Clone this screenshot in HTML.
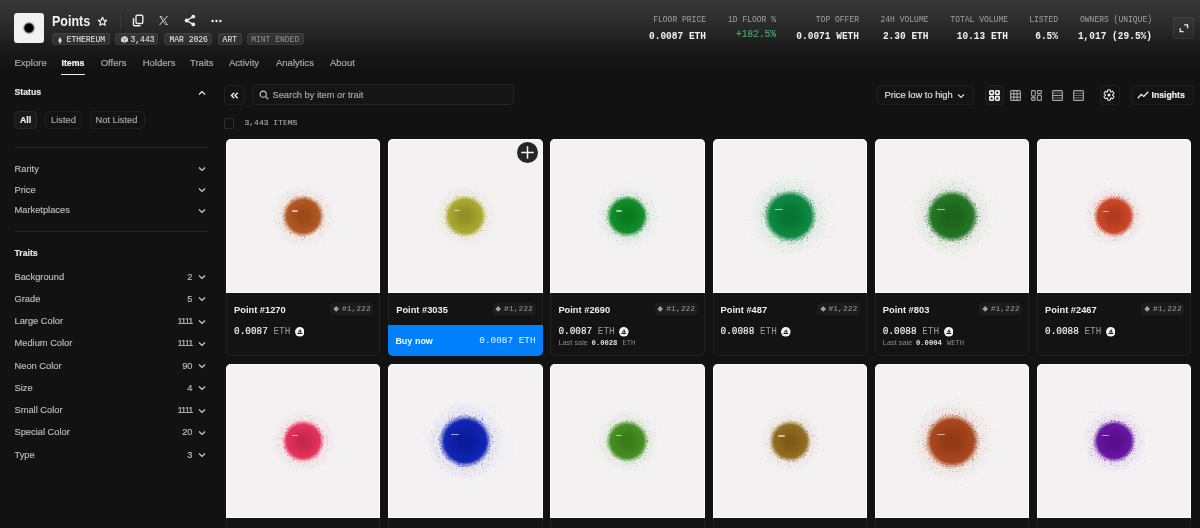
<!DOCTYPE html><html><head><meta charset="utf-8"><style>
*{margin:0;padding:0;box-sizing:border-box}
html,body{width:1200px;height:528px;overflow:hidden;background:#121212;font-family:"Liberation Sans",sans-serif;color:#e6e6e6}
.a{position:absolute}
.hdr{left:0;top:0;width:1200px;height:84px;background:linear-gradient(to bottom,#383838 0px,#303030 16px,#262626 32px,#1c1c1c 46px,#161616 57px,#121212 70px)}
.logo{left:14px;top:13px;width:30px;height:30px;border-radius:3px;background:#f1f1f1;overflow:hidden}
.logo i{position:absolute;left:8.2px;top:7.6px;width:14px;height:14px;border-radius:50%;background:radial-gradient(circle closest-side,#000 0,#000 52%,rgba(0,0,0,.85) 62%,rgba(0,0,0,.3) 75%,rgba(0,0,0,.07) 88%,rgba(0,0,0,0) 100%)}
.title{left:52px;top:13.6px;font-size:12.5px;font-weight:bold;color:#f2f2f2;line-height:16px;transform:scaleY(1.12);transform-origin:left center}
.badge{top:33px;height:12px;border-radius:3px;background:rgba(255,255,255,.08);border:0.5px solid rgba(255,255,255,.06);font-family:"Liberation Mono",monospace;font-size:8px;line-height:12px;color:#e0e0e0;white-space:nowrap}
.badge span{transform:scaleY(1.15);-webkit-text-stroke:0.08px currentColor}
.stat{text-align:right;font-family:"Liberation Mono",monospace;white-space:nowrap}
.stat .l{font-size:8px;color:#a0a0a0;line-height:10px;height:10px;transform:scaleY(1.12);transform-origin:right center}
.stat .v{font-size:9.5px;font-weight:bold;color:#f0f0f0;line-height:12px;margin-top:6.2px;transform:scaleY(1.1);transform-origin:right center}
.tab{top:57px;font-size:9.5px;color:#a8a8a8;line-height:12px;white-space:nowrap;-webkit-text-stroke:0.2px currentColor}
.side{font-size:9.3px;color:#bdbdbd;line-height:12px;white-space:nowrap;-webkit-text-stroke:0.15px currentColor}
.sb{font-weight:bold;color:#e8e8e8}
.btn{border:1px solid #202020;border-radius:4px;background:#131313}
.card{width:154.4px;height:217px;border:1px solid #222;border-radius:5px;background:#131313}
.img{position:absolute;left:-1px;top:-1px;width:154.4px;height:154.4px;background:#f3f1f2;border-radius:5px 5px 0 0;overflow:hidden;box-shadow:inset 0 0 0 1px rgba(255,255,255,.75)}
.dot{position:absolute;border-radius:50%}
.dash{position:absolute;height:1.1px;width:6px;background:rgba(255,255,255,.6);border-radius:1px}
.nm{left:7px;top:163.6px;font-size:9.3px;font-weight:bold;color:#f0f0f0;line-height:12px;white-space:nowrap}
.rk{top:163.4px;height:12px;border-radius:3px;background:#1c1c1c;font-family:"Liberation Mono",monospace;font-size:8px;line-height:12px;color:#9a9a9a;white-space:nowrap}
.rk b{position:absolute;left:3.6px;top:3.4px;width:4.4px;height:4.4px;background:#a0a0a0;transform:rotate(45deg)}
.pr{left:7px;top:186.2px;font-family:"Liberation Mono",monospace;font-size:9.4px;line-height:12px;color:#f2f2f2;white-space:nowrap;transform:scaleY(1.1);transform-origin:left center;-webkit-text-stroke:0.15px #f2f2f2}
.pr span{-webkit-text-stroke:0}
.pr span{color:#9a9a9a}
.os{position:absolute;width:9.5px;height:9.5px;border-radius:50%;background:#f2f2f2}
.ls{left:7px;top:198px;font-size:7.4px;color:#8a8a8a;line-height:10px;white-space:nowrap}
.ls b{font-family:"Liberation Mono",monospace;color:#e0e0e0;font-weight:bold;font-size:7.2px;margin-left:1.5px}
.ls span{font-family:"Liberation Mono",monospace;color:#8a8a8a;font-size:7.2px;margin-left:3px}
</style></head><body><div id="w" style="position:absolute;left:0;top:0;width:1200px;height:528px;will-change:transform">
<div class="a hdr"></div>
<div class="a logo"><i></i></div>
<div class="a title">Points</div>
<svg class="a" style="left:97px;top:16px" width="11" height="11" viewBox="0 0 24 24"><path d="M12 2.8l2.7 6 6.5.6-4.9 4.3 1.5 6.4L12 16.8l-5.8 3.3 1.5-6.4-4.9-4.3 6.5-.6z" fill="none" stroke="#f0f0f0" stroke-width="2.6" stroke-linejoin="round"/></svg>
<div class="a" style="left:120px;top:13px;width:1px;height:16px;background:#3a3a3a"></div>
<svg class="a" style="left:132px;top:14px" width="12" height="13" viewBox="0 0 12 13"><rect x="4" y="1.2" width="6.8" height="8.3" rx="1.2" fill="none" stroke="#e8e8e8" stroke-width="1.4"/><path d="M1.5 4v6.8a1 1 0 0 0 1 1h6" fill="none" stroke="#e8e8e8" stroke-width="1.4"/></svg>
<svg class="a" style="left:158px;top:15px" width="11" height="11" viewBox="0 0 24 24"><path d="M3 2h5.5l5 7 6-7h2.2l-7.1 8.3L22 22h-5.5l-5.4-7.6L4.6 22H2.4l7.6-8.9z M5.8 3.5l11.6 17h2.6L8.5 3.5z" fill="#e0e0e0" fill-rule="evenodd"/></svg>
<svg class="a" style="left:184px;top:14px" width="12" height="13" viewBox="0 0 12 13"><circle cx="9.3" cy="2.6" r="1.9" fill="#eee"/><circle cx="2.6" cy="6.5" r="1.9" fill="#eee"/><circle cx="9.3" cy="10.4" r="1.9" fill="#eee"/><path d="M9.3 2.6L2.6 6.5L9.3 10.4" fill="none" stroke="#eee" stroke-width="1.3"/></svg>
<svg class="a" style="left:211px;top:19px" width="11" height="4" viewBox="0 0 11 4"><circle cx="1.6" cy="2" r="1.2" fill="#eee"/><circle cx="5.5" cy="2" r="1.2" fill="#eee"/><circle cx="9.4" cy="2" r="1.2" fill="#eee"/></svg>
<div class="a badge" style="left:52px;width:58px"><svg class="a" style="left:4.6px;top:2.6px" width="4" height="7" viewBox="0 0 4 7"><path d="M2 0L3.8 3.5 2 7 0.2 3.5z" fill="#ddd"/></svg><span class="a" style="left:13.6px;top:0">ETHEREUM</span></div>
<div class="a badge" style="left:115px;width:43px"><svg class="a" style="left:4.8px;top:2.2px" width="7" height="7" viewBox="0 0 7 7"><path d="M3.5 0L7 1.7v3.6L3.5 7 0 5.3V1.7z" fill="#ddd"/><path d="M0 1.7L3.5 3.4L7 1.7M3.5 3.4V7" fill="none" stroke="#444" stroke-width="0.5"/></svg><span class="a" style="left:14.5px;top:0">3,443</span></div>
<div class="a badge" style="left:164px;width:48px"><span class="a" style="left:4.5px;top:0">MAR 2026</span></div>
<div class="a badge" style="left:218px;width:24px"><span class="a" style="left:3.6px;top:0">ART</span></div>
<div class="a badge" style="left:247px;width:57px"><span class="a" style="left:3.2px;top:0;color:#8e8e8e">MINT ENDED</span></div>
<div class="a stat" style="right:494px;top:14.5px"><div class="l">FLOOR PRICE</div><div class="v">0.0087 ETH</div></div>
<div class="a stat" style="right:424px;top:14.5px"><div class="l">1D FLOOR %</div><div class="v" style="color:#44a566;font-weight:normal;-webkit-text-stroke:0.2px #44a566;position:relative;top:-1.4px">+182.5%</div></div>
<div class="a stat" style="right:341px;top:14.5px"><div class="l">TOP OFFER</div><div class="v">0.0071 WETH</div></div>
<div class="a stat" style="right:271.5px;top:14.5px"><div class="l">24H VOLUME</div><div class="v">2.30 ETH</div></div>
<div class="a stat" style="right:192px;top:14.5px"><div class="l">TOTAL VOLUME</div><div class="v">10.13 ETH</div></div>
<div class="a stat" style="right:142px;top:14.5px"><div class="l">LISTED</div><div class="v">6.5%</div></div>
<div class="a stat" style="right:48px;top:14.5px"><div class="l">OWNERS (UNIQUE)</div><div class="v">1,017 (29.5%)</div></div>
<div class="a" style="left:1173px;top:17px;width:21px;height:22px;border-radius:4px;background:rgba(255,255,255,.03);border:1px solid rgba(255,255,255,.07)"></div>
<svg class="a" style="left:1173px;top:17px" width="22" height="22" viewBox="0 0 22 22"><path d="M11.2 7.9H14.6V11.3M10.6 14.6H7.2V11.2" fill="none" stroke="#f0f0f0" stroke-width="1.3"/></svg>
<div class="a tab" style="left:14.5px">Explore</div>
<div class="a tab" style="left:61.5px;color:#f4f4f4;font-weight:bold;font-size:8.75px">Items</div>
<div class="a tab" style="left:100.7px">Offers</div>
<div class="a tab" style="left:142.7px">Holders</div>
<div class="a tab" style="left:190px">Traits</div>
<div class="a tab" style="left:229px">Activity</div>
<div class="a tab" style="left:276px">Analytics</div>
<div class="a tab" style="left:330px">About</div>
<div class="a" style="left:61px;top:73.5px;width:24px;height:1.5px;background:#f0f0f0;border-radius:1px"></div>
<div class="a side sb" style="left:14.5px;top:86px;font-size:8.7px">Status</div>
<svg class="a" style="left:197.5px;top:89.5px" width="8" height="6" viewBox="0 0 8 6"><path d="M1 4.5L4 1.5L7 4.5" fill="none" stroke="#f0f0f0" stroke-width="1.15"/></svg>
<div class="a btn" style="left:14px;top:111px;width:23px;height:18px;background:#1a1a1a;border-color:#272727"></div>
<div class="a side sb" style="left:20px;top:114px;font-size:8.7px;color:#f4f4f4">All</div>
<div class="a btn" style="left:45px;top:111px;width:37px;height:18px"></div>
<div class="a side" style="left:51px;top:114px;color:#a8a8a8">Listed</div>
<div class="a btn" style="left:90px;top:111px;width:55px;height:18px"></div>
<div class="a side" style="left:95.5px;top:114px;color:#a8a8a8">Not Listed</div>
<div class="a" style="left:15px;top:147px;width:193px;height:1px;background:#242424"></div>
<div class="a side" style="left:14.5px;top:162.5px">Rarity</div>
<svg class="a" style="left:197.5px;top:166.1px" width="8" height="6" viewBox="0 0 8 6"><path d="M1 1.5L4 4.5L7 1.5" fill="none" stroke="#d0d0d0" stroke-width="1.15"/></svg>
<div class="a side" style="left:14.5px;top:183.5px">Price</div>
<svg class="a" style="left:197.5px;top:187.1px" width="8" height="6" viewBox="0 0 8 6"><path d="M1 1.5L4 4.5L7 1.5" fill="none" stroke="#d0d0d0" stroke-width="1.15"/></svg>
<div class="a side" style="left:14.5px;top:204.2px">Marketplaces</div>
<svg class="a" style="left:197.5px;top:207.79999999999998px" width="8" height="6" viewBox="0 0 8 6"><path d="M1 1.5L4 4.5L7 1.5" fill="none" stroke="#d0d0d0" stroke-width="1.15"/></svg>
<div class="a" style="left:15px;top:231px;width:193px;height:1px;background:#242424"></div>
<div class="a side sb" style="left:14.5px;top:247px;font-size:8.7px">Traits</div>
<div class="a side" style="left:14.5px;top:270.5px">Background</div>
<div class="a side" style="right:1007.5px;top:270.5px;">2</div>
<svg class="a" style="left:197.5px;top:274.1px" width="8" height="6" viewBox="0 0 8 6"><path d="M1 1.5L4 4.5L7 1.5" fill="none" stroke="#d0d0d0" stroke-width="1.15"/></svg>
<div class="a side" style="left:14.5px;top:292.75px">Grade</div>
<div class="a side" style="right:1007.5px;top:292.75px;">5</div>
<svg class="a" style="left:197.5px;top:296.35px" width="8" height="6" viewBox="0 0 8 6"><path d="M1 1.5L4 4.5L7 1.5" fill="none" stroke="#d0d0d0" stroke-width="1.15"/></svg>
<div class="a side" style="left:14.5px;top:315.0px">Large Color</div>
<div class="a side" style="right:1007.5px;top:315.0px;letter-spacing:-0.9px;">1111</div>
<svg class="a" style="left:197.5px;top:318.6px" width="8" height="6" viewBox="0 0 8 6"><path d="M1 1.5L4 4.5L7 1.5" fill="none" stroke="#d0d0d0" stroke-width="1.15"/></svg>
<div class="a side" style="left:14.5px;top:337.25px">Medium Color</div>
<div class="a side" style="right:1007.5px;top:337.25px;letter-spacing:-0.9px;">1111</div>
<svg class="a" style="left:197.5px;top:340.85px" width="8" height="6" viewBox="0 0 8 6"><path d="M1 1.5L4 4.5L7 1.5" fill="none" stroke="#d0d0d0" stroke-width="1.15"/></svg>
<div class="a side" style="left:14.5px;top:359.5px">Neon Color</div>
<div class="a side" style="right:1007.5px;top:359.5px;">90</div>
<svg class="a" style="left:197.5px;top:363.1px" width="8" height="6" viewBox="0 0 8 6"><path d="M1 1.5L4 4.5L7 1.5" fill="none" stroke="#d0d0d0" stroke-width="1.15"/></svg>
<div class="a side" style="left:14.5px;top:381.75px">Size</div>
<div class="a side" style="right:1007.5px;top:381.75px;">4</div>
<svg class="a" style="left:197.5px;top:385.35px" width="8" height="6" viewBox="0 0 8 6"><path d="M1 1.5L4 4.5L7 1.5" fill="none" stroke="#d0d0d0" stroke-width="1.15"/></svg>
<div class="a side" style="left:14.5px;top:404.0px">Small Color</div>
<div class="a side" style="right:1007.5px;top:404.0px;letter-spacing:-0.9px;">1111</div>
<svg class="a" style="left:197.5px;top:407.6px" width="8" height="6" viewBox="0 0 8 6"><path d="M1 1.5L4 4.5L7 1.5" fill="none" stroke="#d0d0d0" stroke-width="1.15"/></svg>
<div class="a side" style="left:14.5px;top:426.25px">Special Color</div>
<div class="a side" style="right:1007.5px;top:426.25px;">20</div>
<svg class="a" style="left:197.5px;top:429.85px" width="8" height="6" viewBox="0 0 8 6"><path d="M1 1.5L4 4.5L7 1.5" fill="none" stroke="#d0d0d0" stroke-width="1.15"/></svg>
<div class="a side" style="left:14.5px;top:448.5px">Type</div>
<div class="a side" style="right:1007.5px;top:448.5px;">3</div>
<svg class="a" style="left:197.5px;top:452.1px" width="8" height="6" viewBox="0 0 8 6"><path d="M1 1.5L4 4.5L7 1.5" fill="none" stroke="#d0d0d0" stroke-width="1.15"/></svg>
<div class="a btn" style="left:223.5px;top:84.5px;width:21px;height:20.5px"></div>
<svg class="a" style="left:229.5px;top:91.5px" width="9" height="7" viewBox="0 0 9 7"><path d="M4.2 0.8L1.5 3.5L4.2 6.2M7.7 0.8L5 3.5L7.7 6.2" fill="none" stroke="#f0f0f0" stroke-width="1.4"/></svg>
<div class="a btn" style="left:252px;top:84px;width:262px;height:21px;background:#151515;border-color:#242424"></div>
<svg class="a" style="left:259px;top:90px" width="10" height="10" viewBox="0 0 10 10"><circle cx="4.2" cy="4.2" r="3.1" fill="none" stroke="#cfcfcf" stroke-width="1.1"/><path d="M6.4 6.4L9.2 9.2" stroke="#cfcfcf" stroke-width="1.2"/></svg>
<div class="a side" style="left:272.5px;top:88.5px;color:#a8a8a8">Search by item or trait</div>
<div class="a" style="left:223.5px;top:118px;width:10.5px;height:10.5px;border:1px solid #2e2e2e;border-radius:2px"></div>
<div class="a" style="left:244.5px;top:117.5px;font-family:'Liberation Mono',monospace;font-size:8px;line-height:10px;color:#ababab;-webkit-text-stroke:0.1px #ababab">3,443 ITEMS</div>
<div class="a btn" style="left:876.5px;top:84.5px;width:97px;height:20px"></div>
<div class="a side" style="left:884.5px;top:88.5px;color:#e0e0e0">Price low to high</div>
<svg class="a" style="left:957px;top:92.5px" width="8" height="6" viewBox="0 0 8 6"><path d="M1 1.5L4 4.5L7 1.5" fill="none" stroke="#e0e0e0" stroke-width="1.15"/></svg>
<div class="a btn" style="left:984.5px;top:84.5px;width:19px;height:20px;background:#161616"></div>
<svg class="a" style="left:988.8px;top:89.7px" width="11" height="11" viewBox="0 0 11 11" fill="none" stroke="#f0f0f0" stroke-width="1.6"><rect x="0.8" y="0.8" width="3.6" height="3.6" rx="0.6"/><rect x="6.6" y="0.8" width="3.6" height="3.6" rx="0.6"/><rect x="0.8" y="6.6" width="3.6" height="3.6" rx="0.6"/><rect x="6.6" y="6.6" width="3.6" height="3.6" rx="0.6"/></svg>
<svg class="a" style="left:1009.5px;top:89.5px" width="11" height="11" viewBox="0 0 11 11" fill="none" stroke="#a8a8a8" stroke-width="1.1"><rect x="0.6" y="0.6" width="9.8" height="9.8" rx="1"/><path d="M3.9 0.6v9.8M7.1 0.6v9.8M0.6 3.9h9.8M0.6 7.1h9.8"/></svg>
<svg class="a" style="left:1030.5px;top:89.5px" width="11" height="11" viewBox="0 0 11 11" fill="none" stroke="#a8a8a8" stroke-width="1.1"><rect x="0.6" y="0.6" width="3.6" height="5.5" rx="0.8"/><rect x="6.4" y="0.6" width="4" height="3" rx="0.8"/><rect x="0.6" y="7.6" width="3.6" height="2.8" rx="0.8"/><rect x="6.4" y="5.2" width="4" height="5.2" rx="0.8"/></svg>
<svg class="a" style="left:1051.5px;top:89.5px" width="11" height="11" viewBox="0 0 11 11" fill="none" stroke="#a8a8a8" stroke-width="1.1"><rect x="0.6" y="0.6" width="9.8" height="9.8" rx="1"/><path d="M0.6 5.5h9.8"/><path d="M0.6 3.1h9.8M0.6 7.9h9.8" stroke-width="0.6"/></svg>
<svg class="a" style="left:1072.5px;top:89.5px" width="11" height="11" viewBox="0 0 11 11" fill="none" stroke="#a8a8a8" stroke-width="1.1"><rect x="0.6" y="0.6" width="9.8" height="9.8" rx="1"/><path d="M0.6 3.2h9.8M0.6 5.5h9.8M0.6 7.8h9.8" stroke-width="0.6"/></svg>
<div class="a btn" style="left:1099.5px;top:85px;width:20px;height:19.5px"></div>
<svg class="a" style="left:1103.3px;top:88.8px" width="12" height="12" viewBox="0 0 24 24"><path d="M9.06 5.43 L9.33 1.95 A10.40 10.40 0 0 1 14.67 1.95 L14.94 5.43 A7.20 7.20 0 0 1 16.23 6.17 L19.37 4.66 A10.40 10.40 0 0 1 22.04 9.29 L19.16 11.26 A7.20 7.20 0 0 1 19.16 12.74 L22.04 14.71 A10.40 10.40 0 0 1 19.37 19.34 L16.23 17.83 A7.20 7.20 0 0 1 14.94 18.57 L14.67 22.05 A10.40 10.40 0 0 1 9.33 22.05 L9.06 18.57 A7.20 7.20 0 0 1 7.77 17.83 L4.63 19.34 A10.40 10.40 0 0 1 1.96 14.71 L4.84 12.74 A7.20 7.20 0 0 1 4.84 11.26 L1.96 9.29 A10.40 10.40 0 0 1 4.63 4.66 L7.77 6.17 A7.20 7.20 0 0 1 9.06 5.43 z" fill="none" stroke="#f0f0f0" stroke-width="2.1" stroke-linejoin="round"/><circle cx="12" cy="12" r="3" fill="#f0f0f0"/></svg>
<div class="a btn" style="left:1130.5px;top:85px;width:63px;height:19.5px"></div>
<svg class="a" style="left:1136.5px;top:91px" width="12" height="8" viewBox="0 0 12 8"><path d="M0.8 7.2L4.2 3.4L6.8 5.4L11.2 0.8" fill="none" stroke="#f0f0f0" stroke-width="1.3"/></svg>
<div class="a side sb" style="left:1151.5px;top:88.5px;font-size:8.7px;color:#f0f0f0">Insights</div>
<div class="a card" style="left:226.0px;top:139px"><div class="img"><svg width="155" height="155" style="position:absolute;left:0;top:0"><defs><radialGradient id="g0" cx="77.2" cy="77.2" r="43.85" gradientUnits="userSpaceOnUse"><stop offset="0" stop-color="#000"/><stop offset="0.417" stop-color="#000" stop-opacity="0.5"/><stop offset="0.542" stop-color="#000" stop-opacity="0.16"/><stop offset="0.708" stop-color="#000" stop-opacity="0.05"/><stop offset="1" stop-color="#000" stop-opacity="0"/></radialGradient><radialGradient id="h0" cx="77.2" cy="77.2" r="31.06" gradientUnits="userSpaceOnUse"><stop offset="0" stop-color="#9c4a1a"/><stop offset="0.159" stop-color="#9c4a1a"/><stop offset="0.529" stop-color="#b3551e" stop-opacity="0.97"/><stop offset="0.603" stop-color="#b3551e" stop-opacity="0.45"/><stop offset="0.676" stop-color="#b3551e" stop-opacity="0.06"/><stop offset="1" stop-color="#b3551e" stop-opacity="0"/></radialGradient><filter id="f0" x="0" y="0" width="155" height="155" filterUnits="userSpaceOnUse" color-interpolation-filters="sRGB"><feTurbulence type="fractalNoise" baseFrequency="2.3" numOctaves="1" seed="3" result="n"/><feColorMatrix in="n" type="matrix" values="0 0 0 0 0  0 0 0 0 0  0 0 0 0 0  2.5 0 0 0 -0.75" result="na"/><feComposite in="SourceGraphic" in2="na" operator="arithmetic" k1="0" k2="2.6" k3="-2.6" k4="0" result="m"/><feGaussianBlur in="m" stdDeviation="0.6" result="mb"/><feFlood flood-color="#b3551e" flood-opacity="0.55" result="c"/><feComposite in="c" in2="mb" operator="in"/></filter></defs><rect x="0" y="0" width="155" height="155" fill="url(#g0)" filter="url(#f0)"/><circle cx="77.2" cy="77.2" r="31.06" fill="url(#h0)"/></svg><div class="dash" style="left:65.71600000000001px;top:71.458px;width:6.263999999999999px"></div></div><div class="a nm">Point #1270</div><div class="a rk" style="right:6px;width:43px"><b></b><span class="a" style="left:11.5px;top:0">#1,222</span></div><div class="a pr">0.0087 <span>ETH</span></div><svg class="a" style="left:67.8px;top:187px" width="9.6" height="9.6" viewBox="0 0 20 20"><circle cx="10" cy="10" r="10" fill="#f2f2f2"/><path d="M9.6 4.2L6.4 11.4H9.6z" fill="#141414"/><path d="M10.6 3.6V11.4H14z" fill="#141414"/><path d="M4.6 12.4H15.6L14.4 14.8H5.6z" fill="#141414"/></svg></div>
<div class="a card" style="left:388.2px;top:139px"><div class="img"><svg width="155" height="155" style="position:absolute;left:0;top:0"><defs><radialGradient id="g1" cx="77.2" cy="77.2" r="44.35" gradientUnits="userSpaceOnUse"><stop offset="0" stop-color="#000"/><stop offset="0.417" stop-color="#000" stop-opacity="0.5"/><stop offset="0.542" stop-color="#000" stop-opacity="0.16"/><stop offset="0.708" stop-color="#000" stop-opacity="0.05"/><stop offset="1" stop-color="#000" stop-opacity="0"/></radialGradient><radialGradient id="h1" cx="77.2" cy="77.2" r="31.42" gradientUnits="userSpaceOnUse"><stop offset="0" stop-color="#939128"/><stop offset="0.159" stop-color="#939128"/><stop offset="0.529" stop-color="#a9a72e" stop-opacity="0.97"/><stop offset="0.603" stop-color="#a9a72e" stop-opacity="0.45"/><stop offset="0.676" stop-color="#a9a72e" stop-opacity="0.06"/><stop offset="1" stop-color="#a9a72e" stop-opacity="0"/></radialGradient><filter id="f1" x="0" y="0" width="155" height="155" filterUnits="userSpaceOnUse" color-interpolation-filters="sRGB"><feTurbulence type="fractalNoise" baseFrequency="2.3" numOctaves="1" seed="11" result="n"/><feColorMatrix in="n" type="matrix" values="0 0 0 0 0  0 0 0 0 0  0 0 0 0 0  2.5 0 0 0 -0.75" result="na"/><feComposite in="SourceGraphic" in2="na" operator="arithmetic" k1="0" k2="2.6" k3="-2.6" k4="0" result="m"/><feGaussianBlur in="m" stdDeviation="0.6" result="mb"/><feFlood flood-color="#a9a72e" flood-opacity="0.55" result="c"/><feComposite in="c" in2="mb" operator="in"/></filter></defs><rect x="0" y="0" width="155" height="155" fill="url(#g1)" filter="url(#f1)"/><circle cx="77.2" cy="77.2" r="31.42" fill="url(#h1)"/></svg><div class="dash" style="left:65.584px;top:71.392px;width:6.336px"></div></div><div class="a nm">Point #3035</div><div class="a rk" style="right:6px;width:43px"><b></b><span class="a" style="left:11.5px;top:0">#1,222</span></div><div class="a" style="left:-1px;top:185px;width:154.4px;height:31px;background:#0180fe;border-radius:0 0 5px 5px"></div><div class="a" style="left:6.2px;top:194.5px;font-size:9px;font-weight:bold;color:#f4f8ff;line-height:12px">Buy now</div><div class="a" style="right:6px;top:195px;font-family:'Liberation Mono',monospace;font-size:9.4px;color:#e8f2ff;line-height:12px">0.0087 ETH</div></div>
<div class="a card" style="left:550.4px;top:139px"><div class="img"><svg width="155" height="155" style="position:absolute;left:0;top:0"><defs><radialGradient id="g2" cx="77.2" cy="77.2" r="43.85" gradientUnits="userSpaceOnUse"><stop offset="0" stop-color="#000"/><stop offset="0.417" stop-color="#000" stop-opacity="0.5"/><stop offset="0.542" stop-color="#000" stop-opacity="0.16"/><stop offset="0.708" stop-color="#000" stop-opacity="0.05"/><stop offset="1" stop-color="#000" stop-opacity="0"/></radialGradient><radialGradient id="h2" cx="77.2" cy="77.2" r="31.06" gradientUnits="userSpaceOnUse"><stop offset="0" stop-color="#0a7a20"/><stop offset="0.159" stop-color="#0a7a20"/><stop offset="0.529" stop-color="#0c8c25" stop-opacity="0.97"/><stop offset="0.603" stop-color="#0c8c25" stop-opacity="0.45"/><stop offset="0.676" stop-color="#0c8c25" stop-opacity="0.06"/><stop offset="1" stop-color="#0c8c25" stop-opacity="0"/></radialGradient><filter id="f2" x="0" y="0" width="155" height="155" filterUnits="userSpaceOnUse" color-interpolation-filters="sRGB"><feTurbulence type="fractalNoise" baseFrequency="2.3" numOctaves="1" seed="5" result="n"/><feColorMatrix in="n" type="matrix" values="0 0 0 0 0  0 0 0 0 0  0 0 0 0 0  2.5 0 0 0 -0.75" result="na"/><feComposite in="SourceGraphic" in2="na" operator="arithmetic" k1="0" k2="2.6" k3="-2.6" k4="0" result="m"/><feGaussianBlur in="m" stdDeviation="0.6" result="mb"/><feFlood flood-color="#0c8c25" flood-opacity="0.55" result="c"/><feComposite in="c" in2="mb" operator="in"/></filter></defs><rect x="0" y="0" width="155" height="155" fill="url(#g2)" filter="url(#f2)"/><circle cx="77.2" cy="77.2" r="31.06" fill="url(#h2)"/></svg><div class="dash" style="left:65.71600000000001px;top:71.458px;width:6.263999999999999px"></div></div><div class="a nm">Point #2690</div><div class="a rk" style="right:6px;width:43px"><b></b><span class="a" style="left:11.5px;top:0">#1,222</span></div><div class="a pr">0.0087 <span>ETH</span></div><svg class="a" style="left:67.8px;top:187px" width="9.6" height="9.6" viewBox="0 0 20 20"><circle cx="10" cy="10" r="10" fill="#f2f2f2"/><path d="M9.6 4.2L6.4 11.4H9.6z" fill="#141414"/><path d="M10.6 3.6V11.4H14z" fill="#141414"/><path d="M4.6 12.4H15.6L14.4 14.8H5.6z" fill="#141414"/></svg><div class="a ls">Last sale <b>0.0028</b> <span>ETH</span></div></div>
<div class="a card" style="left:712.5999999999999px;top:139px"><div class="img"><svg width="155" height="155" style="position:absolute;left:0;top:0"><defs><radialGradient id="g3" cx="77.2" cy="77.2" r="55.44" gradientUnits="userSpaceOnUse"><stop offset="0" stop-color="#000"/><stop offset="0.417" stop-color="#000" stop-opacity="0.5"/><stop offset="0.542" stop-color="#000" stop-opacity="0.16"/><stop offset="0.708" stop-color="#000" stop-opacity="0.05"/><stop offset="1" stop-color="#000" stop-opacity="0"/></radialGradient><radialGradient id="h3" cx="77.2" cy="77.2" r="39.27" gradientUnits="userSpaceOnUse"><stop offset="0" stop-color="#077535"/><stop offset="0.159" stop-color="#077535"/><stop offset="0.529" stop-color="#08873d" stop-opacity="0.97"/><stop offset="0.603" stop-color="#08873d" stop-opacity="0.45"/><stop offset="0.676" stop-color="#08873d" stop-opacity="0.06"/><stop offset="1" stop-color="#08873d" stop-opacity="0"/></radialGradient><filter id="f3" x="0" y="0" width="155" height="155" filterUnits="userSpaceOnUse" color-interpolation-filters="sRGB"><feTurbulence type="fractalNoise" baseFrequency="2.3" numOctaves="1" seed="17" result="n"/><feColorMatrix in="n" type="matrix" values="0 0 0 0 0  0 0 0 0 0  0 0 0 0 0  2.5 0 0 0 -0.75" result="na"/><feComposite in="SourceGraphic" in2="na" operator="arithmetic" k1="0" k2="2.6" k3="-2.6" k4="0" result="m"/><feGaussianBlur in="m" stdDeviation="0.6" result="mb"/><feFlood flood-color="#08873d" flood-opacity="0.55" result="c"/><feComposite in="c" in2="mb" operator="in"/></filter></defs><rect x="0" y="0" width="155" height="155" fill="url(#g3)" filter="url(#f3)"/><circle cx="77.2" cy="77.2" r="39.27" fill="url(#h3)"/></svg><div class="dash" style="left:62.68px;top:69.94px;width:7.92px"></div></div><div class="a nm">Point #487</div><div class="a rk" style="right:6px;width:43px"><b></b><span class="a" style="left:11.5px;top:0">#1,222</span></div><div class="a pr">0.0088 <span>ETH</span></div><svg class="a" style="left:67.8px;top:187px" width="9.6" height="9.6" viewBox="0 0 20 20"><circle cx="10" cy="10" r="10" fill="#f2f2f2"/><path d="M9.6 4.2L6.4 11.4H9.6z" fill="#141414"/><path d="M10.6 3.6V11.4H14z" fill="#141414"/><path d="M4.6 12.4H15.6L14.4 14.8H5.6z" fill="#141414"/></svg></div>
<div class="a card" style="left:874.8px;top:139px"><div class="img"><svg width="155" height="155" style="position:absolute;left:0;top:0"><defs><radialGradient id="g4" cx="77.2" cy="77.2" r="55.44" gradientUnits="userSpaceOnUse"><stop offset="0" stop-color="#000"/><stop offset="0.417" stop-color="#000" stop-opacity="0.5"/><stop offset="0.542" stop-color="#000" stop-opacity="0.16"/><stop offset="0.708" stop-color="#000" stop-opacity="0.05"/><stop offset="1" stop-color="#000" stop-opacity="0"/></radialGradient><radialGradient id="h4" cx="77.2" cy="77.2" r="39.27" gradientUnits="userSpaceOnUse"><stop offset="0" stop-color="#1c641c"/><stop offset="0.159" stop-color="#1c641c"/><stop offset="0.529" stop-color="#207320" stop-opacity="0.97"/><stop offset="0.603" stop-color="#207320" stop-opacity="0.45"/><stop offset="0.676" stop-color="#207320" stop-opacity="0.06"/><stop offset="1" stop-color="#207320" stop-opacity="0"/></radialGradient><filter id="f4" x="0" y="0" width="155" height="155" filterUnits="userSpaceOnUse" color-interpolation-filters="sRGB"><feTurbulence type="fractalNoise" baseFrequency="2.3" numOctaves="1" seed="23" result="n"/><feColorMatrix in="n" type="matrix" values="0 0 0 0 0  0 0 0 0 0  0 0 0 0 0  2.5 0 0 0 -0.75" result="na"/><feComposite in="SourceGraphic" in2="na" operator="arithmetic" k1="0" k2="2.6" k3="-2.6" k4="0" result="m"/><feGaussianBlur in="m" stdDeviation="0.6" result="mb"/><feFlood flood-color="#207320" flood-opacity="0.55" result="c"/><feComposite in="c" in2="mb" operator="in"/></filter></defs><rect x="0" y="0" width="155" height="155" fill="url(#g4)" filter="url(#f4)"/><circle cx="77.2" cy="77.2" r="39.27" fill="url(#h4)"/></svg><div class="dash" style="left:62.68px;top:69.94px;width:7.92px"></div></div><div class="a nm">Point #803</div><div class="a rk" style="right:6px;width:43px"><b></b><span class="a" style="left:11.5px;top:0">#1,222</span></div><div class="a pr">0.0088 <span>ETH</span></div><svg class="a" style="left:67.8px;top:187px" width="9.6" height="9.6" viewBox="0 0 20 20"><circle cx="10" cy="10" r="10" fill="#f2f2f2"/><path d="M9.6 4.2L6.4 11.4H9.6z" fill="#141414"/><path d="M10.6 3.6V11.4H14z" fill="#141414"/><path d="M4.6 12.4H15.6L14.4 14.8H5.6z" fill="#141414"/></svg><div class="a ls">Last sale <b>0.0004</b> <span>WETH</span></div></div>
<div class="a card" style="left:1037.0px;top:139px"><div class="img"><svg width="155" height="155" style="position:absolute;left:0;top:0"><defs><radialGradient id="g5" cx="77.2" cy="77.2" r="43.34" gradientUnits="userSpaceOnUse"><stop offset="0" stop-color="#000"/><stop offset="0.417" stop-color="#000" stop-opacity="0.5"/><stop offset="0.542" stop-color="#000" stop-opacity="0.16"/><stop offset="0.708" stop-color="#000" stop-opacity="0.05"/><stop offset="1" stop-color="#000" stop-opacity="0"/></radialGradient><radialGradient id="h5" cx="77.2" cy="77.2" r="30.70" gradientUnits="userSpaceOnUse"><stop offset="0" stop-color="#b03b1f"/><stop offset="0.159" stop-color="#b03b1f"/><stop offset="0.529" stop-color="#ca4424" stop-opacity="0.97"/><stop offset="0.603" stop-color="#ca4424" stop-opacity="0.45"/><stop offset="0.676" stop-color="#ca4424" stop-opacity="0.06"/><stop offset="1" stop-color="#ca4424" stop-opacity="0"/></radialGradient><filter id="f5" x="0" y="0" width="155" height="155" filterUnits="userSpaceOnUse" color-interpolation-filters="sRGB"><feTurbulence type="fractalNoise" baseFrequency="2.3" numOctaves="1" seed="7" result="n"/><feColorMatrix in="n" type="matrix" values="0 0 0 0 0  0 0 0 0 0  0 0 0 0 0  2.5 0 0 0 -0.75" result="na"/><feComposite in="SourceGraphic" in2="na" operator="arithmetic" k1="0" k2="2.6" k3="-2.6" k4="0" result="m"/><feGaussianBlur in="m" stdDeviation="0.6" result="mb"/><feFlood flood-color="#ca4424" flood-opacity="0.55" result="c"/><feComposite in="c" in2="mb" operator="in"/></filter></defs><rect x="0" y="0" width="155" height="155" fill="url(#g5)" filter="url(#f5)"/><circle cx="77.2" cy="77.2" r="30.70" fill="url(#h5)"/></svg><div class="dash" style="left:65.848px;top:71.524px;width:6.191999999999999px"></div></div><div class="a nm">Point #2467</div><div class="a rk" style="right:6px;width:43px"><b></b><span class="a" style="left:11.5px;top:0">#1,222</span></div><div class="a pr">0.0088 <span>ETH</span></div><svg class="a" style="left:67.8px;top:187px" width="9.6" height="9.6" viewBox="0 0 20 20"><circle cx="10" cy="10" r="10" fill="#f2f2f2"/><path d="M9.6 4.2L6.4 11.4H9.6z" fill="#141414"/><path d="M10.6 3.6V11.4H14z" fill="#141414"/><path d="M4.6 12.4H15.6L14.4 14.8H5.6z" fill="#141414"/></svg></div>
<div class="a card" style="left:226.0px;top:364px"><div class="img"><svg width="155" height="155" style="position:absolute;left:0;top:0"><defs><radialGradient id="g6" cx="77.2" cy="77.2" r="44.35" gradientUnits="userSpaceOnUse"><stop offset="0" stop-color="#000"/><stop offset="0.417" stop-color="#000" stop-opacity="0.5"/><stop offset="0.542" stop-color="#000" stop-opacity="0.16"/><stop offset="0.708" stop-color="#000" stop-opacity="0.05"/><stop offset="1" stop-color="#000" stop-opacity="0"/></radialGradient><radialGradient id="h6" cx="77.2" cy="77.2" r="31.42" gradientUnits="userSpaceOnUse"><stop offset="0" stop-color="#c8284e"/><stop offset="0.159" stop-color="#c8284e"/><stop offset="0.529" stop-color="#e62e5a" stop-opacity="0.97"/><stop offset="0.603" stop-color="#e62e5a" stop-opacity="0.45"/><stop offset="0.676" stop-color="#e62e5a" stop-opacity="0.06"/><stop offset="1" stop-color="#e62e5a" stop-opacity="0"/></radialGradient><filter id="f6" x="0" y="0" width="155" height="155" filterUnits="userSpaceOnUse" color-interpolation-filters="sRGB"><feTurbulence type="fractalNoise" baseFrequency="2.3" numOctaves="1" seed="13" result="n"/><feColorMatrix in="n" type="matrix" values="0 0 0 0 0  0 0 0 0 0  0 0 0 0 0  2.5 0 0 0 -0.75" result="na"/><feComposite in="SourceGraphic" in2="na" operator="arithmetic" k1="0" k2="2.6" k3="-2.6" k4="0" result="m"/><feGaussianBlur in="m" stdDeviation="0.6" result="mb"/><feFlood flood-color="#e62e5a" flood-opacity="0.55" result="c"/><feComposite in="c" in2="mb" operator="in"/></filter></defs><rect x="0" y="0" width="155" height="155" fill="url(#g6)" filter="url(#f6)"/><circle cx="77.2" cy="77.2" r="31.42" fill="url(#h6)"/></svg><div class="dash" style="left:65.584px;top:71.392px;width:6.336px"></div></div></div>
<div class="a card" style="left:388.2px;top:364px"><div class="img"><svg width="155" height="155" style="position:absolute;left:0;top:0"><defs><radialGradient id="g7" cx="77.2" cy="77.2" r="55.44" gradientUnits="userSpaceOnUse"><stop offset="0" stop-color="#000"/><stop offset="0.417" stop-color="#000" stop-opacity="0.5"/><stop offset="0.542" stop-color="#000" stop-opacity="0.16"/><stop offset="0.708" stop-color="#000" stop-opacity="0.05"/><stop offset="1" stop-color="#000" stop-opacity="0"/></radialGradient><radialGradient id="h7" cx="77.2" cy="77.2" r="39.27" gradientUnits="userSpaceOnUse"><stop offset="0" stop-color="#0a1c9c"/><stop offset="0.159" stop-color="#0a1c9c"/><stop offset="0.529" stop-color="#0c20b3" stop-opacity="0.97"/><stop offset="0.603" stop-color="#0c20b3" stop-opacity="0.45"/><stop offset="0.676" stop-color="#0c20b3" stop-opacity="0.06"/><stop offset="1" stop-color="#0c20b3" stop-opacity="0"/></radialGradient><filter id="f7" x="0" y="0" width="155" height="155" filterUnits="userSpaceOnUse" color-interpolation-filters="sRGB"><feTurbulence type="fractalNoise" baseFrequency="2.3" numOctaves="1" seed="29" result="n"/><feColorMatrix in="n" type="matrix" values="0 0 0 0 0  0 0 0 0 0  0 0 0 0 0  2.5 0 0 0 -0.75" result="na"/><feComposite in="SourceGraphic" in2="na" operator="arithmetic" k1="0" k2="2.6" k3="-2.6" k4="0" result="m"/><feGaussianBlur in="m" stdDeviation="0.6" result="mb"/><feFlood flood-color="#0c20b3" flood-opacity="0.55" result="c"/><feComposite in="c" in2="mb" operator="in"/></filter></defs><rect x="0" y="0" width="155" height="155" fill="url(#g7)" filter="url(#f7)"/><circle cx="77.2" cy="77.2" r="39.27" fill="url(#h7)"/></svg><div class="dash" style="left:62.68px;top:69.94px;width:7.92px"></div></div></div>
<div class="a card" style="left:550.4px;top:364px"><div class="img"><svg width="155" height="155" style="position:absolute;left:0;top:0"><defs><radialGradient id="g8" cx="77.2" cy="77.2" r="44.35" gradientUnits="userSpaceOnUse"><stop offset="0" stop-color="#000"/><stop offset="0.417" stop-color="#000" stop-opacity="0.5"/><stop offset="0.542" stop-color="#000" stop-opacity="0.16"/><stop offset="0.708" stop-color="#000" stop-opacity="0.05"/><stop offset="1" stop-color="#000" stop-opacity="0"/></radialGradient><radialGradient id="h8" cx="77.2" cy="77.2" r="31.42" gradientUnits="userSpaceOnUse"><stop offset="0" stop-color="#3a7c1a"/><stop offset="0.159" stop-color="#3a7c1a"/><stop offset="0.529" stop-color="#438f1e" stop-opacity="0.97"/><stop offset="0.603" stop-color="#438f1e" stop-opacity="0.45"/><stop offset="0.676" stop-color="#438f1e" stop-opacity="0.06"/><stop offset="1" stop-color="#438f1e" stop-opacity="0"/></radialGradient><filter id="f8" x="0" y="0" width="155" height="155" filterUnits="userSpaceOnUse" color-interpolation-filters="sRGB"><feTurbulence type="fractalNoise" baseFrequency="2.3" numOctaves="1" seed="31" result="n"/><feColorMatrix in="n" type="matrix" values="0 0 0 0 0  0 0 0 0 0  0 0 0 0 0  2.5 0 0 0 -0.75" result="na"/><feComposite in="SourceGraphic" in2="na" operator="arithmetic" k1="0" k2="2.6" k3="-2.6" k4="0" result="m"/><feGaussianBlur in="m" stdDeviation="0.6" result="mb"/><feFlood flood-color="#438f1e" flood-opacity="0.55" result="c"/><feComposite in="c" in2="mb" operator="in"/></filter></defs><rect x="0" y="0" width="155" height="155" fill="url(#g8)" filter="url(#f8)"/><circle cx="77.2" cy="77.2" r="31.42" fill="url(#h8)"/></svg><div class="dash" style="left:65.584px;top:71.392px;width:6.336px"></div></div></div>
<div class="a card" style="left:712.5999999999999px;top:364px"><div class="img"><svg width="155" height="155" style="position:absolute;left:0;top:0"><defs><radialGradient id="g9" cx="77.2" cy="77.2" r="43.85" gradientUnits="userSpaceOnUse"><stop offset="0" stop-color="#000"/><stop offset="0.417" stop-color="#000" stop-opacity="0.5"/><stop offset="0.542" stop-color="#000" stop-opacity="0.16"/><stop offset="0.708" stop-color="#000" stop-opacity="0.05"/><stop offset="1" stop-color="#000" stop-opacity="0"/></radialGradient><radialGradient id="h9" cx="77.2" cy="77.2" r="31.06" gradientUnits="userSpaceOnUse"><stop offset="0" stop-color="#7e5c18"/><stop offset="0.159" stop-color="#7e5c18"/><stop offset="0.529" stop-color="#916a1c" stop-opacity="0.97"/><stop offset="0.603" stop-color="#916a1c" stop-opacity="0.45"/><stop offset="0.676" stop-color="#916a1c" stop-opacity="0.06"/><stop offset="1" stop-color="#916a1c" stop-opacity="0"/></radialGradient><filter id="f9" x="0" y="0" width="155" height="155" filterUnits="userSpaceOnUse" color-interpolation-filters="sRGB"><feTurbulence type="fractalNoise" baseFrequency="2.3" numOctaves="1" seed="19" result="n"/><feColorMatrix in="n" type="matrix" values="0 0 0 0 0  0 0 0 0 0  0 0 0 0 0  2.5 0 0 0 -0.75" result="na"/><feComposite in="SourceGraphic" in2="na" operator="arithmetic" k1="0" k2="2.6" k3="-2.6" k4="0" result="m"/><feGaussianBlur in="m" stdDeviation="0.6" result="mb"/><feFlood flood-color="#916a1c" flood-opacity="0.55" result="c"/><feComposite in="c" in2="mb" operator="in"/></filter></defs><rect x="0" y="0" width="155" height="155" fill="url(#g9)" filter="url(#f9)"/><circle cx="77.2" cy="77.2" r="31.06" fill="url(#h9)"/></svg><div class="dash" style="left:65.71600000000001px;top:71.458px;width:6.263999999999999px"></div></div></div>
<div class="a card" style="left:874.8px;top:364px"><div class="img"><svg width="155" height="155" style="position:absolute;left:0;top:0"><defs><radialGradient id="g10" cx="77.2" cy="77.2" r="56.95" gradientUnits="userSpaceOnUse"><stop offset="0" stop-color="#000"/><stop offset="0.417" stop-color="#000" stop-opacity="0.5"/><stop offset="0.542" stop-color="#000" stop-opacity="0.16"/><stop offset="0.708" stop-color="#000" stop-opacity="0.05"/><stop offset="1" stop-color="#000" stop-opacity="0"/></radialGradient><radialGradient id="h10" cx="77.2" cy="77.2" r="40.34" gradientUnits="userSpaceOnUse"><stop offset="0" stop-color="#933a16"/><stop offset="0.159" stop-color="#933a16"/><stop offset="0.529" stop-color="#a94319" stop-opacity="0.97"/><stop offset="0.603" stop-color="#a94319" stop-opacity="0.45"/><stop offset="0.676" stop-color="#a94319" stop-opacity="0.06"/><stop offset="1" stop-color="#a94319" stop-opacity="0"/></radialGradient><filter id="f10" x="0" y="0" width="155" height="155" filterUnits="userSpaceOnUse" color-interpolation-filters="sRGB"><feTurbulence type="fractalNoise" baseFrequency="2.3" numOctaves="1" seed="37" result="n"/><feColorMatrix in="n" type="matrix" values="0 0 0 0 0  0 0 0 0 0  0 0 0 0 0  2.5 0 0 0 -0.75" result="na"/><feComposite in="SourceGraphic" in2="na" operator="arithmetic" k1="0" k2="2.6" k3="-2.6" k4="0" result="m"/><feGaussianBlur in="m" stdDeviation="0.6" result="mb"/><feFlood flood-color="#a94319" flood-opacity="0.55" result="c"/><feComposite in="c" in2="mb" operator="in"/></filter></defs><rect x="0" y="0" width="155" height="155" fill="url(#g10)" filter="url(#f10)"/><circle cx="77.2" cy="77.2" r="40.34" fill="url(#h10)"/></svg><div class="dash" style="left:62.284px;top:69.742px;width:8.136000000000001px"></div></div></div>
<div class="a card" style="left:1037.0px;top:364px"><div class="img"><svg width="155" height="155" style="position:absolute;left:0;top:0"><defs><radialGradient id="g11" cx="77.2" cy="77.2" r="44.86" gradientUnits="userSpaceOnUse"><stop offset="0" stop-color="#000"/><stop offset="0.417" stop-color="#000" stop-opacity="0.5"/><stop offset="0.542" stop-color="#000" stop-opacity="0.16"/><stop offset="0.708" stop-color="#000" stop-opacity="0.05"/><stop offset="1" stop-color="#000" stop-opacity="0"/></radialGradient><radialGradient id="h11" cx="77.2" cy="77.2" r="31.77" gradientUnits="userSpaceOnUse"><stop offset="0" stop-color="#580f8c"/><stop offset="0.159" stop-color="#580f8c"/><stop offset="0.529" stop-color="#6511a1" stop-opacity="0.97"/><stop offset="0.603" stop-color="#6511a1" stop-opacity="0.45"/><stop offset="0.676" stop-color="#6511a1" stop-opacity="0.06"/><stop offset="1" stop-color="#6511a1" stop-opacity="0"/></radialGradient><filter id="f11" x="0" y="0" width="155" height="155" filterUnits="userSpaceOnUse" color-interpolation-filters="sRGB"><feTurbulence type="fractalNoise" baseFrequency="2.3" numOctaves="1" seed="41" result="n"/><feColorMatrix in="n" type="matrix" values="0 0 0 0 0  0 0 0 0 0  0 0 0 0 0  2.5 0 0 0 -0.75" result="na"/><feComposite in="SourceGraphic" in2="na" operator="arithmetic" k1="0" k2="2.6" k3="-2.6" k4="0" result="m"/><feGaussianBlur in="m" stdDeviation="0.6" result="mb"/><feFlood flood-color="#6511a1" flood-opacity="0.55" result="c"/><feComposite in="c" in2="mb" operator="in"/></filter></defs><rect x="0" y="0" width="155" height="155" fill="url(#g11)" filter="url(#f11)"/><circle cx="77.2" cy="77.2" r="31.77" fill="url(#h11)"/></svg><div class="dash" style="left:65.452px;top:71.32600000000001px;width:6.408px"></div></div></div>
<div class="a" style="left:517px;top:142px;width:21px;height:21px;border-radius:50%;background:#262626"></div>
<svg class="a" style="left:521px;top:146px" width="13" height="13" viewBox="0 0 13 13"><path d="M6.5 0.2v12.6M0.2 6.5h12.6" stroke="#f4f4f4" stroke-width="1.5"/></svg>
</div></body></html>
